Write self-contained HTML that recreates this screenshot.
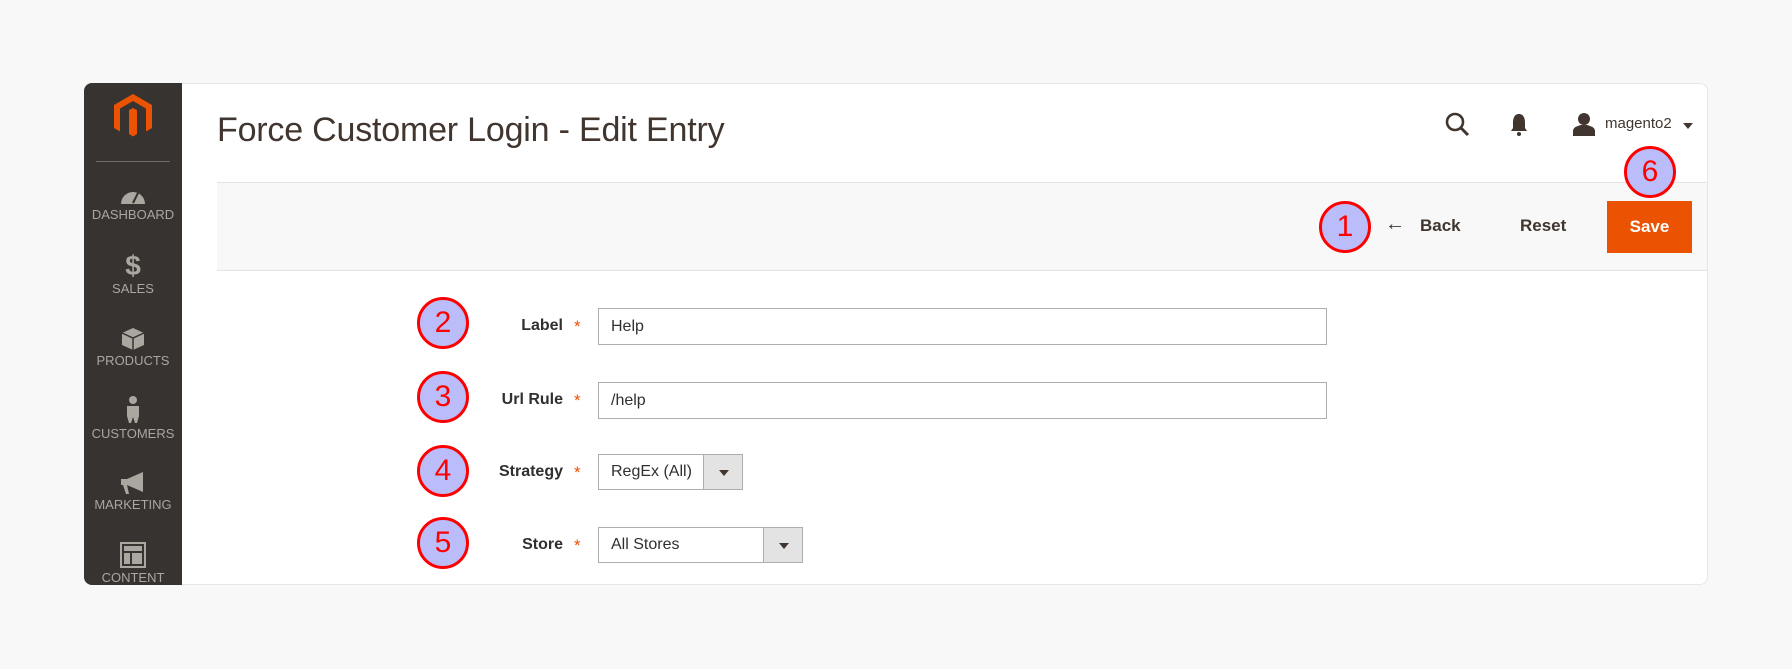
<!DOCTYPE html>
<html><head><meta charset="utf-8"><style>
*{box-sizing:border-box;margin:0;padding:0}
body{width:1792px;height:669px;background:#f8f8f8;position:relative;overflow:hidden;font-family:"Liberation Sans",sans-serif;color:#303030}
.card{position:absolute;left:84px;top:83px;width:1624px;height:502px;background:#fff;border:1px solid #e6e6e6;border-radius:8px;overflow:hidden}
.side{position:absolute;left:84px;top:83px;width:98px;height:502px;background:#373330;border-radius:8px 0 0 8px}
.nav{position:absolute;left:0;width:98px;text-align:center;color:#aaa6a0;font-size:13px}
.nav .i{height:26px;display:flex;align-items:flex-end;justify-content:center;margin-bottom:2px}
.a{position:absolute}
.title{left:217px;top:111px;font-size:34px;color:#41362f;letter-spacing:-0.2px}
.bar{left:217px;top:182px;width:1490px;height:89px;background:#f8f8f8;border-top:1px solid #e3e3e3;border-bottom:1px solid #e3e3e3}
.circ{position:absolute;width:52px;height:52px;border-radius:50%;background:#bbbdfb;border:3px solid #f00;color:#f00;font-size:30px;text-align:center;line-height:46px}
.lbl{position:absolute;width:200px;left:363px;text-align:right;font-weight:bold;font-size:16px;color:#303030}
.star{position:absolute;left:574px;color:#eb5202;font-size:17px}
.inp{position:absolute;left:598px;border:1px solid #adadad;background:#fff;font-size:16px;padding-left:12px;line-height:35px;height:37px}
.sel{position:absolute;left:598px;border:1px solid #adadad;height:36px;font-size:16px;padding-left:12px;line-height:34px;background:#fff}
.sel .b{position:absolute;right:0;top:0;bottom:0;width:39px;background:#e3e3e3;border-left:1px solid #adadad}
.sel .b:after{content:"";position:absolute;left:15px;top:15px;border:5px solid transparent;border-top:6px solid #41362f}
</style></head><body>
<div class="card"></div>
<div class="side">
 <svg class="a" style="left:28px;top:10px" width="42" height="46" viewBox="0 0 42 46"><path d="M21 1 L40 12 V35 L34 38.5 V15.5 L21 8 L8 15.5 V38.5 L2 35 V12 Z" fill="#eb5202"/><path d="M17 17 L21 15 L25 17 V41 L21 43.5 L17 41 Z" fill="#eb5202"/></svg>
 <div class="a" style="left:12px;top:78px;width:74px;height:1px;background:#736963"></div>
 <div class="nav" style="top:96px"><div class="i"><svg width="28" height="20" viewBox="0 0 28 20"><path d="M2 19 A12 12 0 0 1 26 19 Z" fill="#aaa6a0"/><path d="M14 18 L19 8" stroke="#373330" stroke-width="2"/></svg></div>DASHBOARD</div>
 <div class="nav" style="top:170px"><div class="i" style="font-size:28px;font-weight:bold;line-height:26px">$</div>SALES</div>
 <div class="nav" style="top:242px"><div class="i"><svg width="24" height="24" viewBox="0 0 24 24"><path d="M12 1 L23 6 V18 L12 23 L1 18 V6 Z" fill="#aaa6a0"/><path d="M1 6 L12 11 L23 6 M12 11 V23" stroke="#373330" stroke-width="1.5" fill="none"/></svg></div>PRODUCTS</div>
 <div class="nav" style="top:315px"><div class="i"><svg width="18" height="28" viewBox="0 0 18 28"><circle cx="9" cy="4" r="4" fill="#aaa6a0"/><path d="M3 10 H15 V20 L13 27 H11 L9 21 L7 27 H5 L3 20 Z" fill="#aaa6a0"/></svg></div>CUSTOMERS</div>
 <div class="nav" style="top:386px"><div class="i"><svg width="28" height="24" viewBox="0 0 28 24"><path d="M2 8 H8 L24 1 V21 L8 14 L10 23 H7 L4 14 H2 Z" fill="#aaa6a0"/></svg></div>MARKETING</div>
 <div class="nav" style="top:459px"><div class="i"><svg width="26" height="26" viewBox="0 0 26 26"><rect x="1" y="1" width="24" height="24" fill="none" stroke="#aaa6a0" stroke-width="2"/><rect x="4" y="4" width="18" height="5" fill="#aaa6a0"/><rect x="4" y="11" width="6" height="11" fill="#aaa6a0"/><rect x="12" y="11" width="10" height="11" fill="#aaa6a0"/></svg></div>CONTENT</div>
</div>
<div class="a title">Force Customer Login - Edit Entry</div>
<svg class="a" style="left:1445px;top:112px" width="26" height="26" viewBox="0 0 26 26"><circle cx="10" cy="10" r="8" fill="none" stroke="#41362f" stroke-width="2.6"/><path d="M16 16 L23 23" stroke="#41362f" stroke-width="3"/></svg>
<svg class="a" style="left:1510px;top:113px" width="18" height="24" viewBox="0 0 18 24"><path d="M9 1 C4 1 3 6 3 10 V15 L1 18 H17 L15 15 V10 C15 6 14 1 9 1Z" fill="#41362f"/><circle cx="9" cy="21" r="2" fill="#41362f"/></svg>
<svg class="a" style="left:1572px;top:112px" width="24" height="24" viewBox="0 0 24 24"><circle cx="12" cy="7" r="6" fill="#41362f"/><path d="M1 24 V19 C1 15 6 14 9 13 H15 C18 14 23 15 23 19 V24 Z" fill="#41362f"/></svg>
<div class="a" style="left:1605px;top:115px;font-size:15px;color:#41362f">magento2</div>
<div class="a" style="left:1683px;top:123px;border:5px solid transparent;border-top:6px solid #41362f"></div>
<div class="a bar"></div>
<div class="circ" style="left:1319px;top:201px">1</div>
<div class="a" style="left:1385px;top:213px;font-size:20px;color:#41362f">&#8592;</div>
<div class="a" style="left:1420px;top:216px;font-size:17px;font-weight:bold;color:#41362f">Back</div>
<div class="a" style="left:1520px;top:216px;font-size:17px;font-weight:bold;color:#41362f">Reset</div>
<div class="a" style="left:1607px;top:201px;width:85px;height:52px;background:#eb5202;color:#fff;font-size:17px;font-weight:bold;text-align:center;line-height:52px">Save</div>
<div class="circ" style="left:1624px;top:146px">6</div>

<div class="circ" style="left:417px;top:297px">2</div>
<div class="lbl" style="top:317px">Label</div><div class="star" style="top:317px">*</div>
<div class="inp" style="top:308px;width:729px">Help</div>

<div class="circ" style="left:417px;top:371px">3</div>
<div class="lbl" style="top:391px">Url Rule</div><div class="star" style="top:391px">*</div>
<div class="inp" style="top:382px;width:729px">/help</div>

<div class="circ" style="left:417px;top:445px">4</div>
<div class="lbl" style="top:463px">Strategy</div><div class="star" style="top:463px">*</div>
<div class="sel" style="top:454px;width:145px">RegEx (All)<div class="b"></div></div>

<div class="circ" style="left:417px;top:517px">5</div>
<div class="lbl" style="top:536px">Store</div><div class="star" style="top:536px">*</div>
<div class="sel" style="top:527px;width:205px">All Stores<div class="b"></div></div>
</body></html>
